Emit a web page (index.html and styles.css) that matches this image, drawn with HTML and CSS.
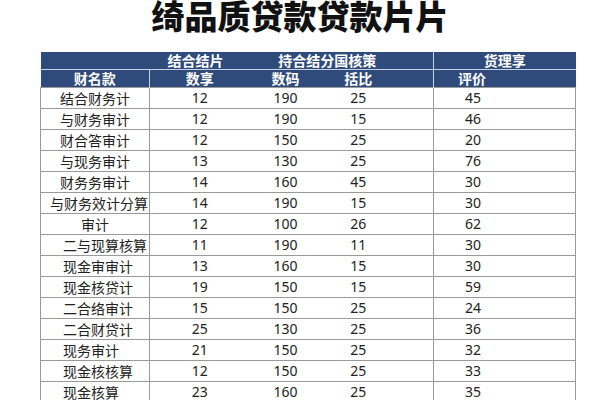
FILE: index.html
```html
<!DOCTYPE html>
<html lang="zh">
<head>
<meta charset="utf-8">
<link rel="stylesheet" href="styles.css">
</head>
<body>
<h1 class="title">绮品质贷款贷款片片</h1>
<table class="grid">
  <colgroup>
    <col class="c1"><col class="c2"><col class="c3"><col class="c4"><col class="c5">
  </colgroup>
  <thead>
    <tr class="h1">
      <th class="blank"></th>
      <th class="g1">结合结片</th>
      <th class="g2" colspan="2">持合结分国核策</th>
      <th class="g3">货理享</th>
    </tr>
    <tr class="h2">
      <th class="name">财名款</th>
      <th class="mid">数享</th>
      <th class="mid">数码</th>
      <th class="n4">括比</th>
      <th class="last">评价</th>
    </tr>
  </thead>
  <tbody>
    <tr><td class="name">结合财务计</td><td>12</td><td>190</td><td class="n4">25</td><td class="last">45</td></tr>
    <tr><td class="name">与财务审计</td><td>12</td><td>190</td><td class="n4">15</td><td class="last">46</td></tr>
    <tr><td class="name">财合答审计</td><td>12</td><td>150</td><td class="n4">25</td><td class="last">20</td></tr>
    <tr><td class="name">与现务审计</td><td>13</td><td>130</td><td class="n4">25</td><td class="last">76</td></tr>
    <tr><td class="name">财务务审计</td><td>14</td><td>160</td><td class="n4">45</td><td class="last">30</td></tr>
    <tr><td class="name wide">与财务效计分算</td><td>14</td><td>190</td><td class="n4">15</td><td class="last">30</td></tr>
    <tr><td class="name">审计</td><td>12</td><td>100</td><td class="n4">26</td><td class="last">62</td></tr>
    <tr><td class="name left">二与现算核算</td><td>11</td><td>190</td><td class="n4">11</td><td class="last">30</td></tr>
    <tr><td class="name left">现金审审计</td><td>13</td><td>160</td><td class="n4">15</td><td class="last">30</td></tr>
    <tr><td class="name left">现金核贷计</td><td>19</td><td>150</td><td class="n4">15</td><td class="last">59</td></tr>
    <tr><td class="name left">二合络审计</td><td>15</td><td>150</td><td class="n4">25</td><td class="last">24</td></tr>
    <tr><td class="name left">二合财贷计</td><td>25</td><td>130</td><td class="n4">25</td><td class="last">36</td></tr>
    <tr><td class="name left">现务审计</td><td>21</td><td>150</td><td class="n4">25</td><td class="last">32</td></tr>
    <tr><td class="name left">现金核核算</td><td>12</td><td>150</td><td class="n4">25</td><td class="last">33</td></tr>
    <tr><td class="name left">现金核算</td><td>23</td><td>160</td><td class="n4">25</td><td class="last">35</td></tr>
  </tbody>
</table>
</body>
</html>
```
FILE: styles.css
```css
html, body {
  margin: 0;
  padding: 0;
  background: #ffffff;
}
body {
  font-family: "Noto Sans", "Noto Sans CJK SC", sans-serif;
  color: #222222;
  overflow: hidden;
}
.title {
  margin: 0;
  height: 52px;
  font-family: "Noto Sans CJK SC", sans-serif;
  font-weight: 900;
  font-size: 33px;
  line-height: 30px;
  text-align: center;
  color: #111111;
  letter-spacing: 0;
}
.grid {
  margin-left: 40px;
  border-collapse: collapse;
  table-layout: fixed;
  width: 535px;
  font-size: 14px;
}
.c1 { width: 109px; }
.c2 { width: 100px; }
.c3 { width: 72px; }
.c4 { width: 112px; }
.c5 { width: 142px; }
th, td {
  padding: 0;
  white-space: nowrap;
  overflow: visible;
}
thead th {
  background: #2f4b7b;
  color: #ffffff;
  font-family: "Noto Sans CJK SC", sans-serif;
  font-weight: 700;
  font-size: 14px;
  text-align: center;
}
.h1 th {
  height: 17px;
  line-height: 17px;
  border-bottom: 1px solid #c9d3e3;
}
.h1 .g2 { padding-right: 28px; }
.h1 .g1 { padding-right: 8px; }
.h1 .g3 { border-left: 1px solid #c9d3e3; }
.h2 th {
  height: 17px;
  line-height: 17px;
}
.h2 .name { border-right: 1px solid #c9d3e3; }
.h2 .last { text-align: left; padding-left: 24px; border-left: 1px solid #c9d3e3; }
tbody td {
  height: 20px;
  line-height: 20px;
  text-align: center;
  border-bottom: 1px solid #9a9a9a;
}
tbody tr:first-child td { border-top: 1px solid #9a9a9a; }
.n4 { padding-right: 38px; }
thead .n4 { padding-right: 38px; }
tbody .name {
  font-family: "Noto Sans CJK SC", sans-serif;
  border-left: 1px solid #9a9a9a;
  border-right: 1px solid #9a9a9a;
}
tbody .name.wide { text-align: right; padding-right: 1px; }
tbody .name.left { text-align: left; padding-left: 22px; }
tbody .last {
  text-align: left;
  padding-left: 31px;
  border-left: 1px solid #9a9a9a;
  border-right: 1px solid #9a9a9a;
}
```
